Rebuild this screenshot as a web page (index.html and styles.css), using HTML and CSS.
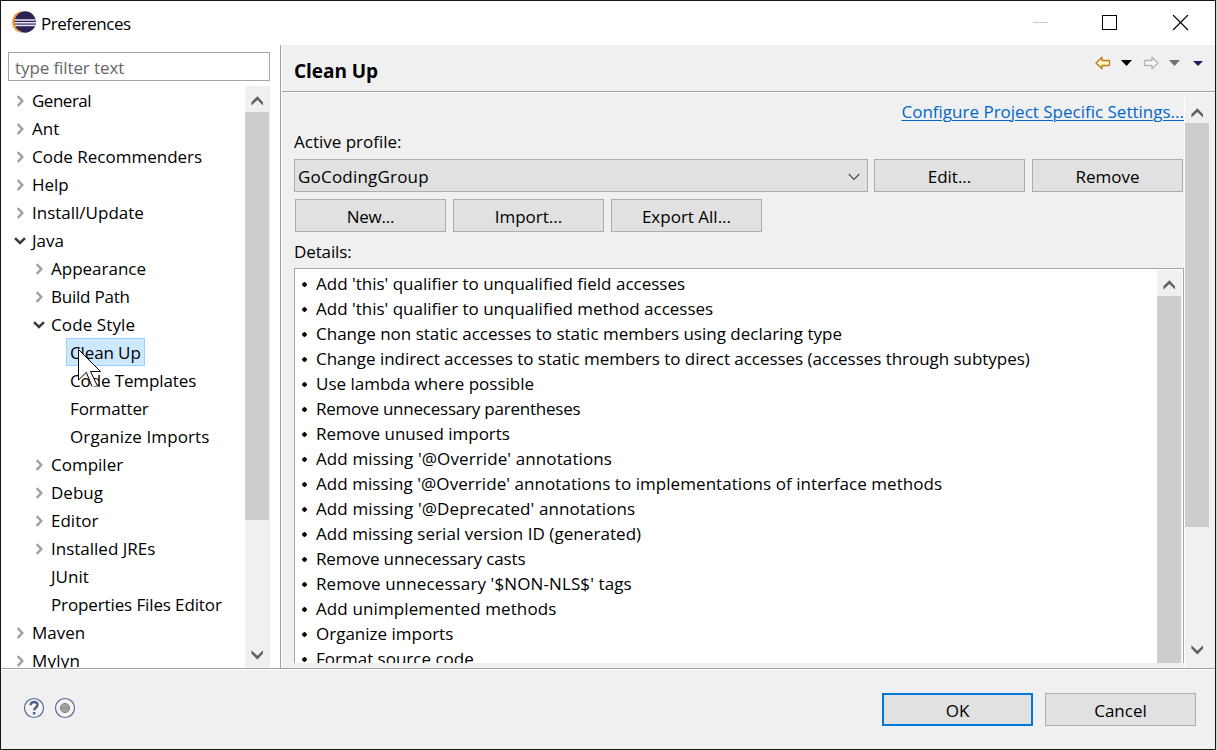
FILE: index.html
```html
<!DOCTYPE html>
<html lang="en">
<head>
<meta charset="utf-8">
<title>Preferences</title>
<link rel="stylesheet" href="styles.css">
</head>
<body>
<svg class="defs" width="0" height="0">
  <symbol id="right" viewBox="0 0 8 12"><path d="M1.700 1.200 6.300 6 1.700 10.800" fill="none" stroke="#a0a0a0" stroke-width="2.4"/></symbol>
  <symbol id="down" viewBox="0 0 12 8"><path d="M1 1.2 6 6 11 1.2" fill="none" stroke="#3c3c3c" stroke-width="2.5"/></symbol>
  <symbol id="sup" viewBox="0 0 12 10"><path d="M.4 6.2 6.400 0.2 12 6.2V9.6L6.400 4 .4 9.6Z" fill="#606060"/></symbol>
  <symbol id="sdown" viewBox="0 0 12 10"><path d="M.4 3.600 6.400 9.600 12 3.600V.2L6.400 5.800.4.2Z" fill="#606060"/></symbol>
</svg>
<div class="window">
  <header class="titlebar">
    <svg class="logo" width="26" height="24" viewBox="0 0 26 24">
      <circle cx="12" cy="12" r="10.8" fill="#f7941e"/>
      <circle cx="15" cy="12" r="11.2" fill="#fff"/>
      <circle cx="14.2" cy="12" r="10.700" fill="#2c2255"/>
      <path d="M3.800 10h20.800M3.500 12.800h21.400M3.800 15.400h20.600" stroke="#e4e2ee" stroke-width="1.5"/>
      <path d="M3.800 14h20.800" stroke="#8a84ab" stroke-width="1"/>
    </svg>
    <h1 class="title">Preferences</h1>
    <svg class="controls" width="156" height="16" viewBox="0 0 156 16" shape-rendering="crispEdges">
      <path d="M0 7.5h15" stroke="#c8c8c8"/>
      <path d="M69.5.5h14v14h-14z" fill="none" stroke="#000"/>
      <path d="M140 0l15 15M155 0l-15 15" stroke="#000" stroke-width="1.2" shape-rendering="auto"/>
    </svg>
  </header>
  <main class="main">
    <nav class="side">
      <div class="filter">type filter text</div>
      <div class="treebox">
        <ul class="tree">
          <li class="t3"><svg class="r"><use href="#right"/></svg><span>General</span></li>
          <li><svg class="r"><use href="#right"/></svg><span>Ant</span></li>
          <li><svg class="r"><use href="#right"/></svg><span>Code Recommenders</span></li>
          <li><svg class="r"><use href="#right"/></svg><span>Help</span></li>
          <li><svg class="r"><use href="#right"/></svg><span>Install/Update</span></li>
          <li><svg class="d"><use href="#down"/></svg><span>Java</span></li>
          <li class="l2"><svg class="r"><use href="#right"/></svg><span>Appearance</span></li>
          <li class="l2 t2"><svg class="r"><use href="#right"/></svg><span>Build Path</span></li>
          <li class="l2 w1"><svg class="d"><use href="#down"/></svg><span>Code Style</span></li>
          <li class="l3 t1"><span class="selected">Clean Up</span>
            <svg class="cursor" width="24" height="39" viewBox="0 0 24 39"><path d="M.5.5v30.500l7.800-7.700 3.700 7.200.5-8h10z" fill="#fff"/><path d="M8.300 23.300 14 37.500h5.500L12.500 22.500z" fill="#fff"/><path d="M14 37.500 8.300 23.300.5 31V.5l22 22H12.500l7 14.500" fill="none" stroke="#000"/></svg></li>
          <li class="l3 t1"><span>Code Templates</span></li>
          <li class="l3 t1"><span>Formatter</span></li>
          <li class="l3 w1"><span>Organize Imports</span></li>
          <li class="l2"><svg class="r"><use href="#right"/></svg><span>Compiler</span></li>
          <li class="l2"><svg class="r"><use href="#right"/></svg><span>Debug</span></li>
          <li class="l2"><svg class="r"><use href="#right"/></svg><span>Editor</span></li>
          <li class="l2"><svg class="r"><use href="#right"/></svg><span>Installed JREs</span></li>
          <li class="l2 leaf"><span>JUnit</span></li>
          <li class="l2 leaf t1"><span>Properties Files Editor</span></li>
          <li><svg class="r"><use href="#right"/></svg><span>Maven</span></li>
          <li class="w2"><svg class="r"><use href="#right"/></svg><span>Mylyn</span></li>
        </ul>
        <div class="scroll tree-scroll"><svg class="arrow"><use href="#sup"/></svg><div class="thumb"></div><svg class="arrow end"><use href="#sdown"/></svg></div>
      </div>
    </nav>
    <section class="page">
      <div class="page-head">
        <h2>Clean Up</h2>
        <svg width="110" height="16" viewBox="0 0 110 16">
          <path d="M1 8 7 2.200V5.500h6.700q.8 0 .8.8v3.400q0 .8-.8.8H7v3.300Z" fill="#fff3c4" stroke="#b8791a" stroke-width="1.300" stroke-linejoin="round"/>
          <path d="M26 5h11l-5.500 6z" fill="#000"/>
          <path d="M63 8 57 2.200V5.500h-6.700q-.8 0-.8.8v3.400q0 .8.8.8H57v3.300Z" fill="#f5f5f5" stroke="#b4b4b4" stroke-width="1.300" stroke-linejoin="round"/>
          <path d="M74 5h11l-5.500 6z" fill="#707070"/>
          <path d="M98 6h10l-5 5z" fill="#2b1a58"/>
        </svg>
      </div>
      <div class="page-body">
        <div class="form">
          <a class="link">Configure Project Specific Settings...</a>
          <div class="label">Active profile:</div>
          <div class="row">
            <div class="combo"><span class="w2">GoCodingGroup</span><svg width="12" height="8" viewBox="0 0 12 8"><path d="M.7 1 6 6.300 11.300 1" fill="none" stroke="#505050" stroke-width="1.200"/></svg></div>
            <div class="btn">Edit...</div>
            <div class="btn">Remove</div>
          </div>
          <div class="row second">
            <div class="btn t2">New...</div>
            <div class="btn">Import...</div>
            <div class="btn">Export All...</div>
          </div>
          <div class="label details t1">Details:</div>
          <div class="listbox">
            <ul class="list">
              <li>Add 'this' qualifier to unqualified field accesses</li>
              <li>Add 'this' qualifier to unqualified method accesses</li>
              <li>Change non static accesses to static members using declaring type</li>
              <li class="t0">Change indirect accesses to static members to direct accesses (accesses through subtypes)</li>
              <li>Use lambda where possible</li>
              <li class="t2">Remove unnecessary parentheses</li>
              <li>Remove unused imports</li>
              <li class="w1">Add missing '@Override' annotations</li>
              <li class="w0">Add missing '@Override' annotations to implementations of interface methods</li>
              <li class="w1">Add missing '@Deprecated' annotations</li>
              <li class="w0">Add missing serial version ID (generated)</li>
              <li class="t1">Remove unnecessary casts</li>
              <li class="w1">Remove unnecessary '$NON-NLS$' tags</li>
              <li class="w1">Add unimplemented methods</li>
              <li>Organize imports</li>
              <li>Format source code</li>
            </ul>
            <div class="scroll list-scroll"><svg class="arrow"><use href="#sup"/></svg><div class="thumb"></div></div>
          </div>
        </div>
        <div class="scroll page-scroll"><svg class="arrow"><use href="#sup"/></svg><div class="thumb"></div><svg class="arrow end"><use href="#sdown"/></svg></div>
      </div>
    </section>
  </main>
  <footer class="footer">
    <svg class="icons" width="54" height="22" viewBox="0 0 54 22">
      <circle cx="11" cy="11" r="9.500" fill="#f4f4f4" stroke="#556a94" stroke-width="1.200"/>
      <path d="M7.600 8.300C7.600 3.800 14.700 3.900 14.500 8c-.1 2.300-3.300 2.700-3.300 5.300" fill="none" stroke="#4d6389" stroke-width="2.500"/>
      <rect x="9.900" y="15" width="2.500" height="2.500" fill="#4d6389"/>
      <circle cx="42" cy="11" r="9.500" fill="#f4f4f4" stroke="#556a94" stroke-width="1.200"/>
      <circle cx="42" cy="11" r="4.600" fill="#a3a3a3" stroke="#858585"/>
      <path d="M38 11h8" stroke="#8b8b8b"/>
    </svg>
    <div class="btn default">OK</div>
    <div class="btn">Cancel</div>
  </footer>
</div>
</body>
</html>
```
FILE: styles.css
```css
* { box-sizing: border-box; }
body {
  margin: 0;
  background: #d4d4d4;
  font: 17px/28px "Open Sans", "Noto Sans", sans-serif;
  color: #000;
  overflow: hidden;
}
ul, h1, h2 { margin: 0; padding: 0; list-style: none; }
svg { display: block; flex: none; }
.defs { position: absolute; }
/* tracking: t = tighter, w = wider */
.t0 { letter-spacing: -0.04px; }
.t1 { letter-spacing: -0.12px; }
.t2 { letter-spacing: -0.22px; }
.t3 { letter-spacing: -0.5px; }
.w0 { letter-spacing: 0.06px; }
.w1 { letter-spacing: 0.11px; }
.w2 { letter-spacing: 0.2px; }
.window {
  width: 1216px;
  height: 750px;
  border: 1px solid #161616;
  display: flex;
  flex-direction: column;
  background: #f0f0f0;
}
.titlebar {
  flex: none;
  height: 44px;
  background: #fff;
  display: flex;
  padding: 9px 26px 0 10px;
}
.title { font-size: 17px; font-weight: 400; letter-spacing: -0.45px; margin-left: 4px; line-height: 28px; }
.controls { margin: 5px 0 0 auto; }
.main {
  height: 624px;
  flex: none;
  display: flex;
  border-bottom: 1px solid #a0a0a0;
}
.side {
  width: 280px;
  flex: none;
  background: #fff;
  border-right: 1px solid #a0a0a0;
  padding: 7px 10px 0 7px;
  display: flex;
  flex-direction: column;
}
.filter {
  flex: none;
  height: 29px;
  border: 1px solid #a5a5ad;
  padding: 1px 6px;
  color: #666;
  letter-spacing: -0.1px;
}
.treebox { display: flex; flex: 1; min-height: 0; margin-top: 5px; overflow: hidden; }
.tree { flex: 1; }
.tree li {
  height: 28px;
  display: flex;
  align-items: center;
  padding-left: 8px;
  white-space: nowrap;
  position: relative;
}
.tree li span { line-height: 26px; padding-top: 2px; }
.tree .l2 { padding-left: 27px; }
.tree .leaf { padding-left: 43px; }
.tree .l3 { padding-left: 58px; }
.tree .l3 span { padding: 2px 4px 0; }
.r { width: 8px; height: 12px; margin: 2px 8px 0 0; }
.d { width: 12px; height: 8px; margin: 1px 6px 0 -2px; }
.tree .selected {
  background: #cce8ff;
  outline: 1px solid #99d1ff;
  outline-offset: -1px;
}
.cursor { position: absolute; left: 70px; top: 11px; z-index: 1; }
.scroll { background: #f0f0f0; flex: none; width: 25px; display: flex; flex-direction: column; }
.arrow { width: 12px; height: 10px; margin: 10px 0 6px 6px; }
.arrow.end { margin: auto 0 8px 6px; }
.thumb { width: 24px; background: #cdcdcd; flex: none; }
.tree-scroll .thumb { height: 408px; }
.page { flex: 1; display: flex; flex-direction: column; min-width: 0; border-left: 1px solid #fff; }
.page-head {
  height: 47px;
  flex: none;
  border-bottom: 1px solid #a0a0a0;
  display: flex;
  justify-content: space-between;
  padding: 12px 10px 0 12px;
}
h2 { font-size: 19px; line-height: 28px; font-weight: 700; letter-spacing: -0.05px; }
.page-head svg { margin-top: -2px; }
.page-body { display: flex; flex: 1; min-height: 0; border-top: 1px solid #fff; }
.form { width: 902px; flex: none; display: flex; flex-direction: column; padding: 5px 0 5px 12px; }
.link {
  align-self: flex-end;
  color: #0066cc;
  text-decoration: underline;
  text-underline-offset: 2px;
  text-decoration-thickness: 1px;
  line-height: 28px;
  white-space: nowrap;
}
.label { line-height: 28px; margin-top: 2px; }
.row { display: flex; gap: 7px; margin-top: 3px; height: 33px; }
.combo {
  width: 574px;
  margin-right: -1px;
  height: 33px;
  border: 1px solid #adadad;
  background: #e1e1e1;
  padding: 3px 7px 0 3px;
  display: flex;
  justify-content: space-between;
}
.combo svg { margin-top: 10px; }
.btn {
  width: 151px;
  height: 33px;
  border: 1px solid #adadad;
  background: #e1e1e1;
  text-align: center;
  line-height: 28px;
  padding-top: 3px;
}
.second { margin: 7px 0 0 1px; }
.details { margin-top: 6px; }
.listbox {
  flex: 1;
  min-height: 0;
  overflow: hidden;
  width: 890px;
  margin-top: 2px;
  border: 1px solid #a5a5ad;
  border-bottom: 0;
  background: #fff;
  display: flex;
  padding: 1px 1px 0 7px;
}
.list { flex: 1; padding-top: 1px; }
.list li { height: 25px; line-height: 25px; white-space: nowrap; display: flex; align-items: center; }
.list li::before {
  content: "";
  width: 5px;
  height: 5px;
  margin: 2px 9px 0 0;
  border-radius: 50%;
  background: radial-gradient(circle, #000 2px, transparent 2.6px);
}
.list-scroll .thumb { flex: 1; }
.page-scroll { width: 31px; border-left: 1px solid #fff; margin-top: 5px; }
.page-scroll .arrow { margin-top: 10px; margin-bottom: 5px; }
.page-scroll .thumb { height: 404px; }
.page-scroll .arrow.end { margin: auto 0 13px 6px; }
.footer {
  flex: 1;
  border-top: 1px solid #fff;
  display: flex;
  padding: 23px 19px 0 22px;
  gap: 12px;
}
.icons { margin: 4px auto 0 0; }
.default { border: 2px solid #0078d7; padding-top: 2px; }
```
